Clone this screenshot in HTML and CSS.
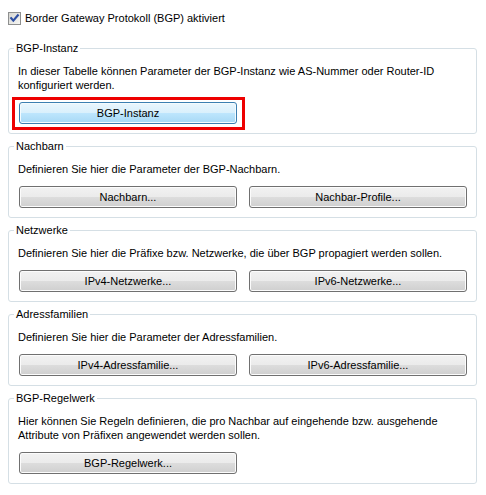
FILE: index.html
```html
<!DOCTYPE html>
<html lang="de">
<head>
    <meta charset="UTF-8">
    <title>BGP</title>
    <link rel="stylesheet" href="styles.css">
</head>
<body>
    <div class="page">
        <label class="check-row">
            <span class="checkbox">
                <svg width="13" height="13" viewBox="0 0 13 13">
                    <defs>
                        <linearGradient id="cbfill" x1="0" y1="0" x2="1" y2="1">
                            <stop offset="0" stop-color="#d4d4cf"/>
                            <stop offset="1" stop-color="#f8f8f6"/>
                        </linearGradient>
                    </defs>
                    <rect x="0.5" y="0.5" width="12" height="12" fill="url(#cbfill)" stroke="#8e8f8f"/>
                    <path d="M3.2 6.2 L5.3 8.6 L9.8 3.4" fill="none" stroke="#2d4fa3" stroke-width="2.2" stroke-linecap="square"/>
                </svg>
            </span>
            <span>Border Gateway Protokoll (BGP) aktiviert</span>
        </label>

        <fieldset class="group">
            <legend>BGP-Instanz</legend>
            <p>In dieser Tabelle können Parameter der BGP-Instanz wie AS-Nummer oder Router-ID konfiguriert werden.</p>
            <div class="buttons">
                <span class="mark"><button class="btn default">BGP-Instanz</button></span>
            </div>
        </fieldset>

        <fieldset class="group">
            <legend>Nachbarn</legend>
            <p>Definieren Sie hier die Parameter der BGP-Nachbarn.</p>
            <div class="buttons">
                <button class="btn">Nachbarn...</button>
                <button class="btn">Nachbar-Profile...</button>
            </div>
        </fieldset>

        <fieldset class="group">
            <legend>Netzwerke</legend>
            <p>Definieren Sie hier die Präfixe bzw. Netzwerke, die über BGP propagiert werden sollen.</p>
            <div class="buttons">
                <button class="btn">IPv4-Netzwerke...</button>
                <button class="btn">IPv6-Netzwerke...</button>
            </div>
        </fieldset>

        <fieldset class="group">
            <legend>Adressfamilien</legend>
            <p>Definieren Sie hier die Parameter der Adressfamilien.</p>
            <div class="buttons">
                <button class="btn">IPv4-Adressfamilie...</button>
                <button class="btn">IPv6-Adressfamilie...</button>
            </div>
        </fieldset>

        <fieldset class="group">
            <legend>BGP-Regelwerk</legend>
            <p>Hier können Sie Regeln definieren, die pro Nachbar auf eingehende bzw. ausgehende Attribute von Präfixen angewendet werden sollen.</p>
            <div class="buttons">
                <button class="btn">BGP-Regelwerk...</button>
            </div>
        </fieldset>
    </div>
</body>
</html>
```

FILE: styles.css
```css
body {
    margin: 0;
    background-color: white;
    font-family: 'Liberation Sans', Arial, sans-serif;
    font-size: 11px;
    color: black;
}

.page {
    padding: 12px 9px 0 8px;
    width: 469px;
}

.check-row {
    display: flex;
    align-items: center;
    gap: 4px;
    height: 13px;
    line-height: 13px;
}

.checkbox {
    display: block;
    width: 13px;
    height: 13px;
}

.checkbox svg {
    display: block;
}

.group {
    margin: 17px 0 0 0;
    padding: 9px 9px 9px 9px;
    border: 1px solid #d5dfe5;
    border-radius: 3px;
    min-width: 0;
}

.group + .group {
    margin-top: 6px;
}

.group legend {
    padding: 0 2px;
    margin-left: -4px;
    line-height: 13px;
}

.group p {
    margin: 0;
    line-height: 14px;
}

.buttons {
    display: grid;
    grid-template-columns: 218px 218px;
    column-gap: 12px;
    margin: 10px 0 0 1px;
}

.btn {
    height: 22px;
    padding: 0;
    font-family: inherit;
    font-size: 11px;
    color: black;
    border: 1px solid #707070;
    border-radius: 3px;
    background: linear-gradient(#f2f2f2 0%, #ebebeb 50%, #dddddd 50%, #cfcfcf 100%);
    box-shadow: inset 0 0 0 1px #fcfcfc;
}

.btn.default {
    border-color: #3c7fb1;
    background: linear-gradient(#eaf6fd 0%, #d9f0fc 50%, #bee6fd 50%, #a7d9f5 100%);
    box-shadow: inset 0 0 0 1px #f4fbfe;
}

.mark {
    position: relative;
    display: grid;
}

/* red annotation frame drawn over the button */
.mark::after {
    content: '';
    position: absolute;
    top: -5px;
    bottom: -6px;
    left: -7px;
    right: -8px;
    border: 3px solid #ee0000;
}
```
